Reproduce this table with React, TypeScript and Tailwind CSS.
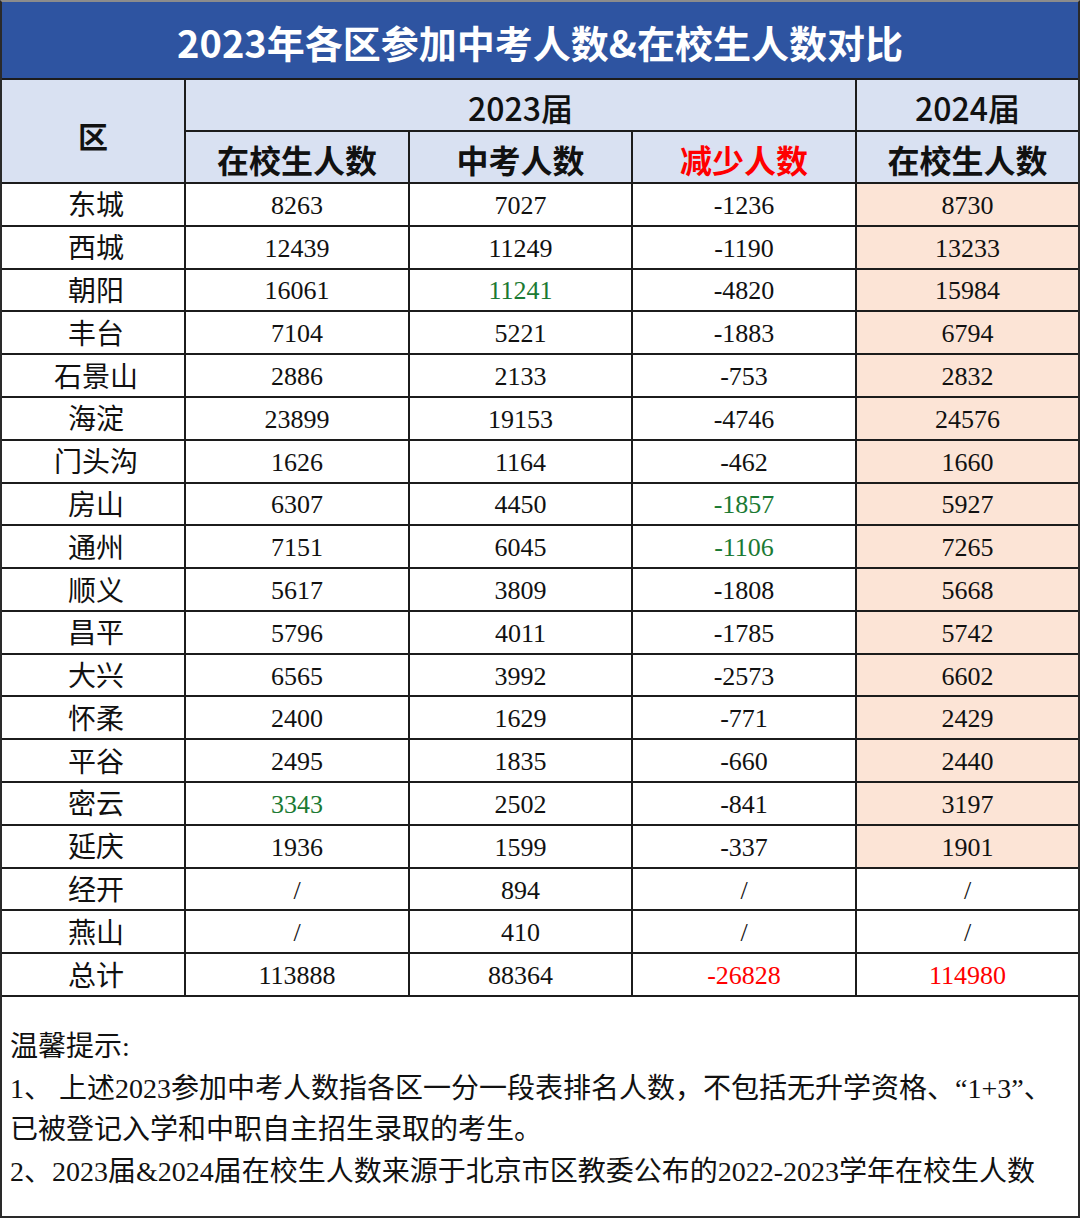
import React from "react";

type Row = { name: string; a: string; b: string; c: string; d: string; ag?: boolean; bg?: boolean; cg?: boolean; total?: boolean; plain?: boolean };

const rows: Row[] = [
  { name: "东城", a: "8263", b: "7027", c: "-1236", d: "8730" },
  { name: "西城", a: "12439", b: "11249", c: "-1190", d: "13233" },
  { name: "朝阳", a: "16061", b: "11241", c: "-4820", d: "15984", bg: true },
  { name: "丰台", a: "7104", b: "5221", c: "-1883", d: "6794" },
  { name: "石景山", a: "2886", b: "2133", c: "-753", d: "2832" },
  { name: "海淀", a: "23899", b: "19153", c: "-4746", d: "24576" },
  { name: "门头沟", a: "1626", b: "1164", c: "-462", d: "1660" },
  { name: "房山", a: "6307", b: "4450", c: "-1857", d: "5927", cg: true },
  { name: "通州", a: "7151", b: "6045", c: "-1106", d: "7265", cg: true },
  { name: "顺义", a: "5617", b: "3809", c: "-1808", d: "5668" },
  { name: "昌平", a: "5796", b: "4011", c: "-1785", d: "5742" },
  { name: "大兴", a: "6565", b: "3992", c: "-2573", d: "6602" },
  { name: "怀柔", a: "2400", b: "1629", c: "-771", d: "2429" },
  { name: "平谷", a: "2495", b: "1835", c: "-660", d: "2440" },
  { name: "密云", a: "3343", b: "2502", c: "-841", d: "3197", ag: true },
  { name: "延庆", a: "1936", b: "1599", c: "-337", d: "1901" },
  { name: "经开", a: "/", b: "894", c: "/", d: "/", plain: true },
  { name: "燕山", a: "/", b: "410", c: "/", d: "/", plain: true },
  { name: "总计", a: "113888", b: "88364", c: "-26828", d: "114980", plain: true, total: true },
];

const SERIF = "font-['Liberation_Serif','Noto_Sans_CJK_SC',serif]";
const SANS = "font-['Noto_Sans_CJK_SC',sans-serif]";

function Num({ children, tone, pink }: { children: React.ReactNode; tone: "black" | "green" | "red"; pink?: boolean }) {
  const color = tone === "green" ? "text-[#1b7a33]" : tone === "red" ? "text-[#ff0000]" : "text-[#111]";
  return (
    <div className={`${pink ? "bg-[#fce4d6]" : "bg-white"} ${color} ${SERIF} flex items-center justify-center text-[26px] pt-[2px]`}>
      {children}
    </div>
  );
}

export default function App() {
  return (
    <div className="w-[1080px] h-[1218px] bg-white border-2 border-[#2a2a2a] border-t-[#8c8c8c] flex flex-col overflow-hidden">
      <div className={`h-[78px] shrink-0 bg-[#2e54a1] border-b-2 border-[#1c1c1c] flex items-center justify-center text-white font-bold text-[38px] pt-[2px] ${SANS}`}>
        2023年各区参加中考人数&amp;在校生人数对比
      </div>
      <div className="h-[917px] shrink-0 grid grid-cols-[182px_222px_221px_222px_221px] grid-rows-[50px_50px_repeat(19,minmax(0,1fr))] gap-[2px] bg-[#1c1c1c] border-b-2 border-[#1c1c1c]">
        <div className={`row-span-2 bg-[#d9e1f2] flex items-center justify-center text-[30px] font-bold text-[#111] pt-[8px] ${SANS}`}>区</div>
        <div className={`col-span-3 bg-[#d9e1f2] flex items-center justify-center text-[32px] font-medium text-[#111] pt-[4px] ${SANS}`}>2023届</div>
        <div className={`bg-[#d9e1f2] flex items-center justify-center text-[32px] font-medium text-[#111] pt-[4px] ${SANS}`}>2024届</div>
        <div className={`bg-[#d9e1f2] flex items-center justify-center text-[32px] font-bold text-[#111] pt-[4px] ${SANS}`}>在校生人数</div>
        <div className={`bg-[#d9e1f2] flex items-center justify-center text-[32px] font-bold text-[#111] pt-[4px] ${SANS}`}>中考人数</div>
        <div className={`bg-[#d9e1f2] flex items-center justify-center text-[32px] font-bold text-[#ff0000] pt-[4px] ${SANS}`}>减少人数</div>
        <div className={`bg-[#d9e1f2] flex items-center justify-center text-[32px] font-bold text-[#111] pt-[4px] ${SANS}`}>在校生人数</div>
        {rows.map((r) => (
          <React.Fragment key={r.name}>
            <div className={`bg-white flex items-center justify-center text-[28px] text-[#111] pt-[4px] pl-[6px] ${SERIF}`}>{r.name}</div>
            <Num tone={r.ag ? "green" : "black"}>{r.a}</Num>
            <Num tone={r.bg ? "green" : "black"}>{r.b}</Num>
            <Num tone={r.total ? "red" : r.cg ? "green" : "black"}>{r.c}</Num>
            <Num tone={r.total ? "red" : "black"} pink={!r.plain}>{r.d}</Num>
          </React.Fragment>
        ))}
      </div>
      <div className={`flex-1 pl-[8px] pt-[29px] text-[28px] leading-[41.5px] text-[#111] ${SERIF}`}>
        <div>温馨提示:</div>
        <div>1、 上述2023参加中考人数指各区一分一段表排名人数，不包括无升学资格、“1+3”、</div>
        <div>已被登记入学和中职自主招生录取的考生。</div>
        <div>2、2023届&amp;2024届在校生人数来源于北京市区教委公布的2022-2023学年在校生人数</div>
      </div>
    </div>
  );
}
